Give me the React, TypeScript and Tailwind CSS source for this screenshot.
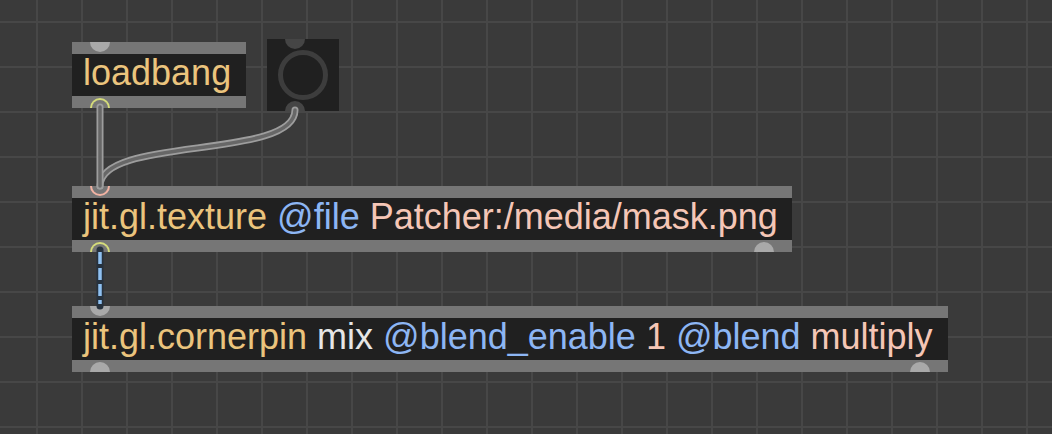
import React from 'react';

type Seg = { t: string; c: string };

const YEL = 'text-[#ebc47d]';
const BLU = 'text-[#8db6f4]';
const PNK = 'text-[#f5c6b6]';
const WHT = 'text-[#e6e6e6]';

// a port is a half circle sitting on the top or bottom edge of a box
function Port({ edge, side, ring }: { edge: 'top' | 'bottom'; side: 'left' | 'right'; ring?: string }) {
    const pos = side === 'left' ? 'left-[18px]' : 'right-[18px]';
    const shape =
        edge === 'top'
            ? 'top-0 rounded-b-full border-t-0'
            : 'bottom-0 rounded-t-full border-b-0';
    const look = ring ? `border-[2.5px] ${ring} bg-[#767676]` : 'bg-[#a9a9a9] border-0';
    return <div className={`absolute w-5 h-2.5 ${pos} ${shape} ${look}`} />;
}

function ObjBox({
    x,
    y,
    w,
    segs,
    children,
}: {
    x: string;
    y: string;
    w: string;
    segs: Seg[];
    children?: React.ReactNode;
}) {
    return (
        <div className={`absolute ${x} ${y} ${w} flex flex-col`}>
            <div className="h-3 bg-[#767676]" />
            <div className="h-[42px] bg-[#202020] pl-[11px] leading-[38px] text-[36px] whitespace-pre">
                {segs.map((s, i) => (
                    <span key={i} className={s.c}>
                        {s.t}
                    </span>
                ))}
            </div>
            <div className="h-3 bg-[#767676]" />
            {children}
        </div>
    );
}

export default function App() {
    return (
        <div className="relative w-[1052px] h-[434px] overflow-hidden bg-[#3a3a3a] bg-[image:linear-gradient(to_right,#474747_2px,transparent_2px),linear-gradient(to_bottom,#474747_2px,transparent_2px)] bg-[size:45px_45px] bg-[position:36px_21px] font-['Liberation_Sans',Arial,sans-serif]">
            <ObjBox x="left-[72px]" y="top-[42px]" w="w-[174px]" segs={[{ t: 'loadbang', c: YEL }]}>
                <Port edge="top" side="left" />
                <Port edge="bottom" side="left" ring="border-[#d5dc7a]" />
            </ObjBox>

            {/* bang button */}
            <div className="absolute left-[267px] top-[39px] w-[72px] h-[72px] bg-[#202020] flex items-center justify-center">
                <div className="w-[50px] h-[50px] rounded-full border-[5px] border-[#3d3d3d]" />
                <div className="absolute left-[18px] top-0 w-5 h-2.5 rounded-b-full bg-[#454545]" />
                <div className="absolute left-[18px] bottom-0 w-5 h-2.5 rounded-t-full bg-[#454545]" />
            </div>

            <ObjBox
                x="left-[72px]"
                y="top-[186px]"
                w="w-[720px]"
                segs={[
                    { t: 'jit.gl.texture ', c: YEL },
                    { t: '@file ', c: BLU },
                    { t: 'Patcher:/media/mask.png', c: PNK },
                ]}
            >
                <Port edge="top" side="left" ring="border-[#f2b3a3]" />
                <Port edge="bottom" side="left" ring="border-[#d5dc7a]" />
                <Port edge="bottom" side="right" />
            </ObjBox>

            <ObjBox
                x="left-[72px]"
                y="top-[306px]"
                w="w-[876px]"
                segs={[
                    { t: 'jit.gl.cornerpin ', c: YEL },
                    { t: 'mix ', c: WHT },
                    { t: '@blend_enable ', c: BLU },
                    { t: '1 ', c: PNK },
                    { t: '@blend ', c: BLU },
                    { t: 'multiply', c: PNK },
                ]}
            >
                <Port edge="top" side="left" />
                <Port edge="bottom" side="left" />
                <Port edge="bottom" side="right" />
            </ObjBox>

            {/* patch cords */}
            <svg className="absolute inset-0 pointer-events-none" width="1052" height="434" viewBox="0 0 1052 434">
                <g fill="none" strokeLinecap="round">
                    <path d="M295 110 C295 160 100 136 100 186" stroke="#9d9d9d" strokeWidth="7" />
                    <path d="M295 110 C295 160 100 136 100 186" stroke="#676767" strokeWidth="3.5" />
                    <path d="M100 107 L100 186" stroke="#9d9d9d" strokeWidth="7" />
                    <path d="M100 107 L100 186" stroke="#676767" strokeWidth="3.5" />
                    <path d="M100 250 L100 306" stroke="#26313d" strokeWidth="7" />
                    <path d="M100 252 L100 304" stroke="#8fc0f0" strokeWidth="3.5" strokeDasharray="12 4" strokeLinecap="butt" />
                </g>
            </svg>
        </div>
    );
}
